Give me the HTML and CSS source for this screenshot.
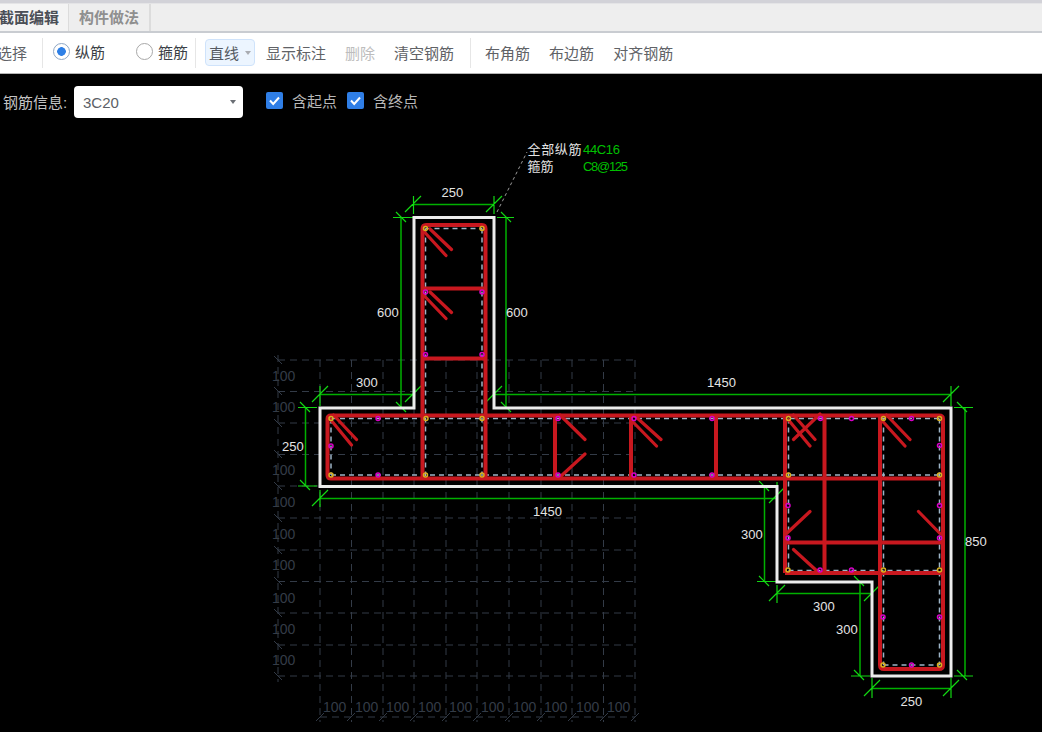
FILE: index.html
```html
<!DOCTYPE html>
<html lang="zh">
<head>
<meta charset="utf-8">
<title>截面编辑</title>
<link rel="stylesheet" href="styles.css">
</head>
<body>
<div class="strip"></div>
<div class="tabs">
  <div class="tab tab-active">截面编辑</div>
  <div class="tab">构件做法</div>
</div>
<div class="toolbar">
  <span class="tool tool-first">选择</span>
  <span class="sep sep-a"></span>
  <label class="radio radio-a"><span class="dot dot-on"></span>纵筋</label>
  <label class="radio radio-b"><span class="dot"></span>箍筋</label>
  <span class="sep sep-b"></span>
  <span class="drop">直线<i class="caret caret-light"></i></span>
  <span class="tool">显示标注</span>
  <span class="tool tool-off">删除</span>
  <span class="tool">清空钢筋</span>
  <span class="sep sep-c"></span>
  <span class="tool tool-next">布角筋</span>
  <span class="tool">布边筋</span>
  <span class="tool">对齐钢筋</span>
</div>
<div class="canvas">
  <svg class="drawing" width="1042" height="658" viewBox="0 74 1042 658">
    <g class="grid">
      <path d="M278 360H635M278 391.5H635M278 423H635M278 454.5H635M278 486H635M278 518H635M278 550H635M278 581.5H635M278 613H635M278 645H635M278 676H635M320 717H635"/>
      <path d="M278 355V682M320 360V722M351.500 360V722M383 360V722M414 360V722M446 360V722M477 360V722M509 360V722M541 360V722M572 360V722M603.500 360V722M635 360V722"/>
    </g>
    <g class="grid-ticks">
      <path d="M274 356l8 8M274 387l8 8M274 419l8 8M274 450l8 8M274 482l8 8M274 514l8 8M274 546l8 8M274 577l8 8M274 609l8 8M274 641l8 8M274 672l8 8"/>
      <path d="M316 721l8-8M347 721l8-8M379 721l8-8M410 721l8-8M442 721l8-8M473 721l8-8M505 721l8-8M537 721l8-8M568 721l8-8M600 721l8-8M631 721l8-8"/>
    </g>
    <g class="grid-text">
      <text x="272" y="381">100</text><text x="272" y="412">100</text><text x="272" y="475">100</text><text x="272" y="507">100</text><text x="272" y="539">100</text><text x="272" y="570">100</text><text x="272" y="603">100</text><text x="272" y="634">100</text><text x="272" y="665">100</text>
      <text x="323" y="712">100</text><text x="355" y="712">100</text><text x="386" y="712">100</text><text x="418" y="712">100</text><text x="449" y="712">100</text><text x="481" y="712">100</text><text x="513" y="712">100</text><text x="544" y="712">100</text><text x="576" y="712">100</text><text x="607" y="712">100</text>
    </g>

    <path class="leader" d="M497 212L527 152"/>

    <path class="dim" d="M413.500 204.500H494M401 217.500V407.500M506 217.500V407.500M320 394.500H413.500M494 394.500H951M305.500 407.500V486M320 498.500H777M764.500 486.500V581.500M777 593.500H872M860 581.500V676M872 688.500H951M965 407.500V676"/>
    <path class="dim-bright" d="M413.500 196V214M405 212l16-16M494 196V214M486 212l16-16
      M393 217.500H413M396 212l10 10M497 217.500H514M501 212l10 10
      M393 407.500H413M396 402l10 10M497 407.500H514M501 402l10 10
      M320 386V406M312 402l16-16M413.500 386V406M405 402l16-16M494 386V406M486 402l16-16M951 386V406M943 402l16-16
      M298 407.500H317M300 402l10 10M298 486H317M300 480l10 10
      M320 490V507M312 506l16-16M777 482V507M769 503l16-16
      M757 486.500H776M759 481l10 10M757 581.500H776M759 576l10 10
      M777 585V603M769 601l16-16M872 582V603M864 601l16-16
      M851 581.500H870M854 576l10 10M851 676H870M854 670l10 10
      M872 678V698M864 696l16-16M951 678V698M943 696l16-16
      M954 407.500H973M957 402l10 10M954 676H973M957 670l10 10"/>

    <path class="outline" d="M414 217.500H494V408H951V676H872V582H777V486.500H320V408H414Z"/>

    <path class="inner" d="M425.500 228.500H482M425.500 228.500V476M482 228.500V476M331 418.500H939.500M331 475H939.500M331 418.500V475M788.500 418.500V570.500M883.500 418.500V665M939.500 418.500V665M788.500 570.500H939.500M883.500 665H939.500"/>

    <path class="rebar" d="M426 225H482Q485.500 225 485.500 229V478M422.500 229Q422.500 225 426 225M422.500 229V478M422.500 288.500H485.500M422.500 358.500H485.500
      M331 415.500H939Q943 415.500 943 419V665Q943 669 939 669H884Q880 669 880 665V478.500M327.500 419Q327.500 415.500 331 415.500M327.500 419V475Q327.500 478.500 331 478.500H943
      M555 415.500V478.500M631 415.500V478.500M716 415.500V478.500M785 415.500V573M824.500 415.500V573M880 415.500V478.500M785 542.500H943M785 573H943"/>
    <path class="hook" d="M423.500 231L446 255.500M430 229L451.500 249.500M423.500 295L446 318.500M430 292L451.500 312.500
      M328.500 417L351.500 445M333.500 415L356.500 439.500
      M560 415L585 439.500M560 477L585 454M635 416L661 439.500M633.500 422.500L656.500 446
      M788.500 420L810 446M793.500 415L815 439.500M820 414L793.500 439.500M881.500 420L905 446M886.500 415L910 439.500
      M786 534L810 511.500M940 533.500L918.500 511.500M793.500 549.500L817.500 571.500"/>

    <g class="pin-y">
      <circle cx="425.500" cy="228.500" r="2"/><circle cx="482" cy="228.500" r="2"/><circle cx="331" cy="418.500" r="2"/><circle cx="426" cy="418.500" r="2"/><circle cx="482" cy="418.500" r="2"/><circle cx="331" cy="475" r="2"/><circle cx="425.500" cy="475" r="2"/><circle cx="482" cy="475" r="2"/><circle cx="788.500" cy="418.500" r="2"/><circle cx="883.500" cy="418.500" r="2"/><circle cx="939.500" cy="418.500" r="2"/><circle cx="788.500" cy="475" r="2"/><circle cx="939.500" cy="475" r="2"/><circle cx="788" cy="570" r="2"/><circle cx="883.500" cy="570" r="2"/><circle cx="939.500" cy="570" r="2"/><circle cx="883" cy="665" r="2"/><circle cx="939.500" cy="665" r="2"/>
    </g>
    <g class="pin-m">
      <circle cx="425.500" cy="292" r="2"/><circle cx="482" cy="292" r="2"/><circle cx="425.500" cy="354.500" r="2"/><circle cx="482" cy="354.500" r="2"/><circle cx="378" cy="418.500" r="2"/><circle cx="331" cy="446" r="2"/><circle cx="378" cy="475" r="2"/><circle cx="558" cy="418.500" r="2"/><circle cx="558" cy="475" r="2"/><circle cx="634" cy="418.500" r="2"/><circle cx="634" cy="475" r="2"/><circle cx="712" cy="418.500" r="2"/><circle cx="712" cy="475" r="2"/><circle cx="820.500" cy="418.500" r="2"/><circle cx="851.500" cy="418.500" r="2"/><circle cx="911.500" cy="418.500" r="2"/><circle cx="939.500" cy="445.500" r="2"/><circle cx="788" cy="505.500" r="2"/><circle cx="939.500" cy="505.500" r="2"/><circle cx="788" cy="538" r="2"/><circle cx="939.500" cy="538" r="2"/><circle cx="820" cy="570" r="2"/><circle cx="851.500" cy="570" r="2"/><circle cx="883" cy="617" r="2"/><circle cx="939.500" cy="617" r="2"/><circle cx="911.500" cy="665" r="2"/>
    </g>

    <g class="label">
      <text x="441.500" y="197">250</text>
      <text x="377" y="317">600</text>
      <text x="506" y="317">600</text>
      <text x="356" y="387">300</text>
      <text x="707" y="387">1450</text>
      <text x="282" y="451">250</text>
      <text x="533" y="516">1450</text>
      <text x="741" y="539">300</text>
      <text x="813" y="611">300</text>
      <text x="836" y="634">300</text>
      <text x="965" y="546">850</text>
      <text x="900.500" y="706">250</text>
      <text x="527.500" y="154" textLength="54">全部纵筋</text>
      <text x="527.500" y="171">箍筋</text>
    </g>
    <g class="label-green">
      <text x="583" y="154" textLength="37">44C16</text>
      <text x="583" y="171" textLength="45">C8@125</text>
    </g>
  </svg>
  <div class="options">
    <span class="field-label">钢筋信息:</span>
    <span class="select">3C20<i class="caret"></i></span>
    <label class="check check-a"><span class="box"><svg width="17" height="17" viewBox="0 0 17 17"><path d="M4 8.500L7.200 12L13 5.500"/></svg></span>含起点</label>
    <label class="check check-b"><span class="box"><svg width="17" height="17" viewBox="0 0 17 17"><path d="M4 8.500L7.200 12L13 5.500"/></svg></span>含终点</label>
  </div>
</div>
</body>
</html>
```
FILE: styles.css
```css
* { box-sizing: border-box; }
html, body { margin: 0; height: 100%; }
body {
  width: 1042px;
  height: 732px;
  overflow: hidden;
  font-family: "Liberation Sans", "Noto Sans CJK SC", sans-serif;
  font-size: 15px;
  color: #606266;
  background: #000;
}
.strip {
  height: 4px;
  background: #d2d2d8;
  border-bottom: 1px solid #e4e4e6;
}
.tabs {
  display: flex;
  height: 29px;
  background: #eeeeee;
  border-bottom: 2px solid #c9ccd1;
}
.tab {
  padding: 0 10px;
  line-height: 27px;
  font-weight: 700;
  color: #8f8f8f;
  border-right: 2px solid #dcdcdc;
}
.tab-active {
  margin-left: -11px;
  padding-right: 9px;
  color: #4b4f57;
  background: #f4f4f4;
  border-right: 1px solid #dcdcdc;
}
.toolbar {
  display: flex;
  align-items: center;
  height: 41px;
  padding-bottom: 1px;
  background: #fff;
  border-bottom: 1px solid #b4b4b4;
}
.tool { margin-right: 19px; white-space: nowrap; }
.tool-first { margin-left: -3px; margin-right: 15px; }
.tool-off { color: #bdbdbd; }
.tool-next { margin-left: 14px; }
.sep {
  width: 1px;
  height: 30px;
  background: #e6e6e6;
}
.sep-a { margin-right: 10px; }
.sep-b { margin-left: 7px; margin-right: 9px; }
.sep-c { margin-left: -3px; }
.radio {
  display: flex;
  align-items: center;
  color: #3c3f46;
  margin-top: -2px;
}
.radio-a { margin-right: 31px; }
.dot {
  width: 17px;
  height: 17px;
  margin-right: 5px;
  border: 1px solid #a8a8a8;
  border-radius: 50%;
  background: #fff;
}
.dot-on {
  border-color: #8fa7c4;
  background: radial-gradient(circle, #2d7fe6 0 4px, #fff 4.6px);
}
.drop {
  display: flex;
  align-items: center;
  width: 50px;
  height: 27px;
  margin-right: 11px;
  padding-left: 3px;
  background: #ecf5ff;
  border: 1px solid #cfe3fb;
  border-radius: 4px;
  color: #555a62;
}
.caret {
  display: block;
  width: 0;
  height: 0;
  border-left: 3.500px solid transparent;
  border-right: 3.500px solid transparent;
  border-top: 4px solid #6b6f75;
}
.caret-light { margin-left: 6px; border-top-color: #a9acb2; }
.canvas {
  position: relative;
  height: 658px;
  background: #000;
}
.drawing {
  position: absolute;
  left: 0;
  top: 0;
}
.options {
  position: relative;
  display: flex;
  align-items: center;
  padding: 12px 0 0 3px;
}
.field-label { width: 71px; margin-top: -2px; color: #c4c4c4; }
.select {
  display: flex;
  align-items: center;
  justify-content: space-between;
  width: 169px;
  height: 32px;
  padding: 0 7px 0 9px;
  background: #fff;
  border-radius: 4px;
  color: #5c5f66;
}
.check {
  display: flex;
  align-items: center;
  margin-top: -3px;
  color: #b8b8b8;
}
.check-a { margin-left: 23px; }
.check-b { margin-left: 10px; }
.box {
  display: block;
  width: 17px;
  height: 17px;
  margin-right: 9px;
  background: #2f7ee6;
  border-radius: 2px;
}
.box svg { display: block; fill: none; stroke: #fff; stroke-width: 2; }

.grid path { fill: none; stroke: #333b47; stroke-width: 1; stroke-dasharray: 7 5; }
.grid-ticks path { fill: none; stroke: #333b47; stroke-width: 1; }
.grid-text text { font-size: 14px; fill: #343c47; }
.leader { fill: none; stroke: #9a9a9a; stroke-width: 1; stroke-dasharray: 3 3; }
.dim { fill: none; stroke: #00b000; stroke-width: 1.500; }
.dim-bright { fill: none; stroke: #12d812; stroke-width: 1.200; }
.outline { fill: none; stroke: #ececec; stroke-width: 3; }
.inner { fill: none; stroke: #9db4c6; stroke-width: 1.500; stroke-dasharray: 5 4; }
.rebar { fill: none; stroke: #c8181f; stroke-width: 4; }
.hook { fill: none; stroke: #c8181f; stroke-width: 3.200; stroke-linecap: round; }
.pin-y circle { fill: none; stroke: #d8b020; stroke-width: 1.500; }
.pin-m circle { fill: none; stroke: #d800c8; stroke-width: 1.500; }
.label text { font-size: 13px; fill: #e4e4e4; }
.label-green text { font-size: 13px; fill: #00c000; }
```
